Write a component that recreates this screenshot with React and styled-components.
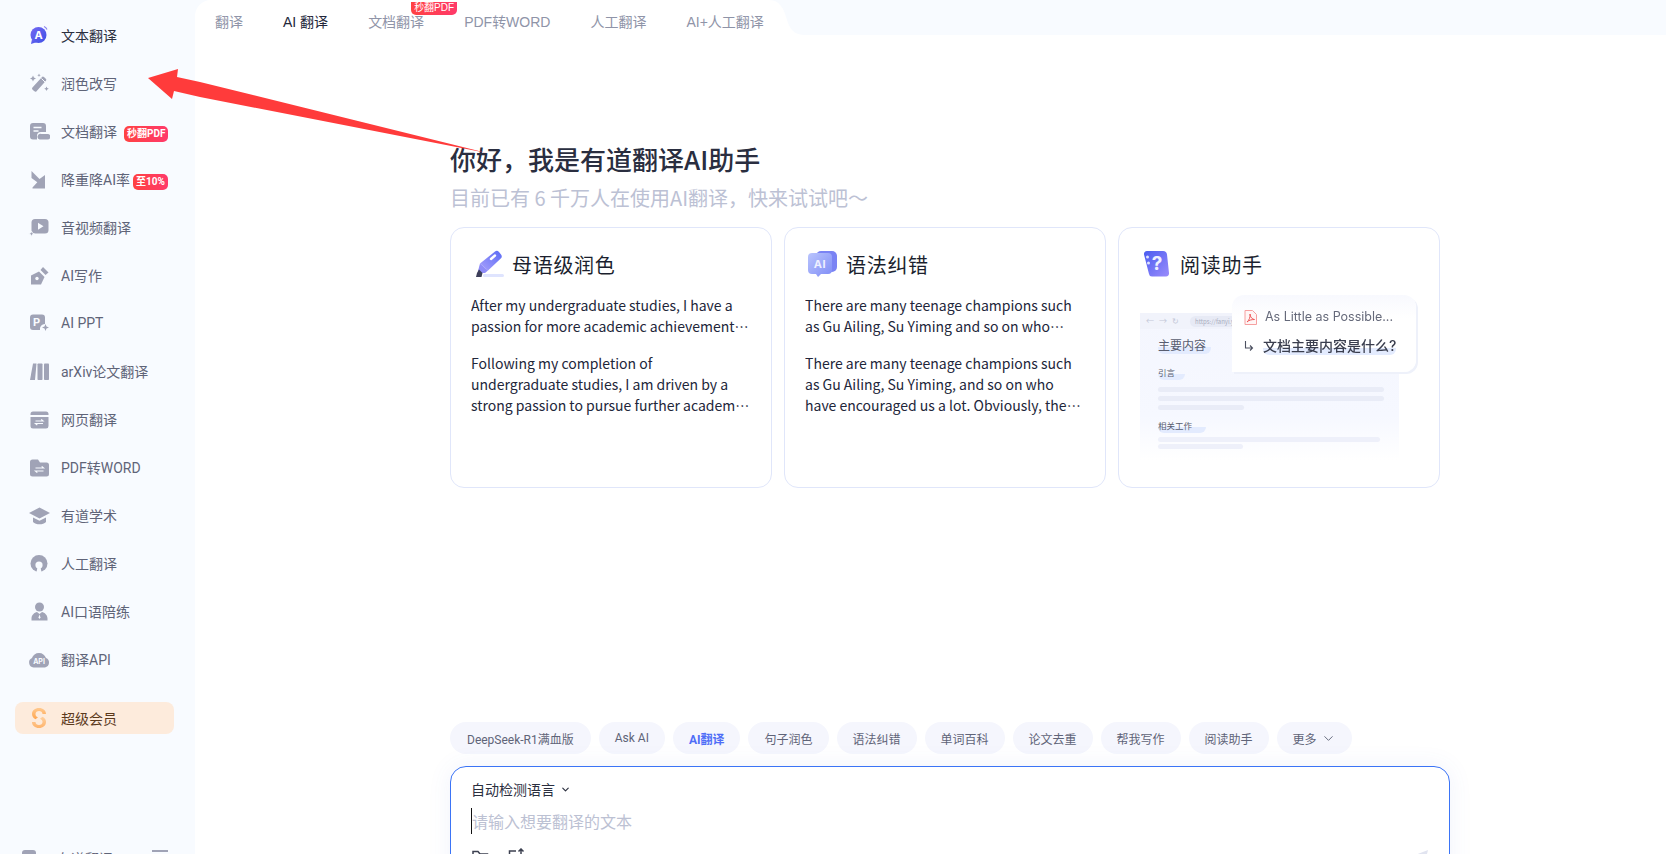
import React from "react";
import styled, { createGlobalStyle } from "styled-components";
import { ChevronDown } from "lucide-react";

const GlobalStyle = createGlobalStyle`
  * { box-sizing: border-box; }
  html, body { margin: 0; height: 100%; overflow: hidden; background: #f8fbff; }
  body { font-family: Roboto, "Noto Sans CJK SC", sans-serif; }
`;

const Page = styled.div`
  position: relative;
  display: flex;
  width: 1666px;
  height: 854px;
  overflow: hidden;
  background: #f8fbff;
`;

/* sidebar */
const Sidebar = styled.aside`
  width: 195px;
  flex: none;
  padding: 11px 21px 0 15px;
`;

const NavItem = styled.div`
  display: flex;
  align-items: center;
  gap: 11px;
  height: 48px;
  padding-left: 13px;
  font-size: 14px;
  color: ${(p) => (p.$active ? "#2b2f3f" : "#5f6478")};
  white-space: nowrap;
`;

const VipItem = styled(NavItem)`
  height: 32px;
  margin-top: 19px;
  border-radius: 8px;
  background: #fdebdc;
  color: #5c3a1c;
`;

const IconBox = styled.svg`
  width: 22px;
  height: 22px;
  flex: none;
  fill: #a0a3b6;
`;

const HotBadge = styled.span`
  display: inline-block;
  height: 16px;
  margin-left: ${(p) => p.$offset}px;
  padding: 0 3px;
  border-radius: 5px;
  background: linear-gradient(90deg, #ff4242, #ff3a6a);
  color: #fff;
  font-size: 10px;
  font-weight: 700;
  line-height: 16px;
`;

const SideFooter = styled.div`
  display: flex;
  align-items: flex-start;
  margin-top: 116px;
  padding-left: 7px;
  font-size: 14px;
  color: #5f6478;
`;

const FootAvatar = styled.div`
  width: 14px;
  height: 14px;
  border-radius: 3px;
  background: #a0a3b6;
`;

const FootName = styled.div`
  margin-left: 21px;
  line-height: 18px;
  width: 95px;
`;

const FootMenu = styled.div`
  width: 16px;
  height: 2px;
  background: #a0a3b6;
`;

/* main panel */
const Main = styled.main`
  flex: 1;
  min-width: 0;
  background: #fff;
  border-top-left-radius: 16px;
`;

const TabRow = styled.div`
  display: flex;
  height: 35px;
`;

const Tabs = styled.nav`
  display: flex;
  gap: 40px;
  padding: 9px 5px 0 20px;
  height: 35px;
  align-items: center;
`;

const Tab = styled.div`
  position: relative;
  font-family: "Liberation Sans", "Noto Sans CJK SC", sans-serif;
  font-size: 14px;
  line-height: 20px;
  color: ${(p) => (p.$active ? "#22263a" : "#8f94a8")};
  white-space: nowrap;
`;

const TabBadge = styled.span`
  position: absolute;
  top: -10px;
  left: 43px;
  height: 13px;
  padding: 0 3px;
  border-radius: 0 0 5px 5px;
  background: linear-gradient(90deg, #ff4242, #ff3a6a);
  color: #fff;
  font-size: 10px;
  line-height: 12px;
`;

const TabCurve = styled.svg`
  width: 42px;
  height: 35px;
  flex: none;
  fill: #f8fbff;
`;

const TabFill = styled.div`
  flex: 1;
  background: #f8fbff;
`;

const Content = styled.div`
  width: 1000px;
  margin-left: 255px;
  font-family: "Noto Sans CJK SC", sans-serif;
`;

const Heading = styled.h1`
  margin: 107px 0 0;
  font-size: 26px;
  font-weight: 500;
  line-height: 34px;
  color: #2a2e40;
`;

const SubHeading = styled.p`
  margin: 8px 0 0;
  font-size: 20px;
  line-height: 28px;
  color: #bcc1d4;
`;

const CardGrid = styled.div`
  display: grid;
  grid-template-columns: repeat(3, 321.5px);
  gap: 12.5px;
  margin-top: 15px;
`;

const Card = styled.section`
  height: 261px;
  padding: 22px 20px 0;
  border: 1px solid #e0e6fa;
  border-radius: 14px;
  background: #fff;
`;

const CardTitle = styled.div`
  display: flex;
  align-items: center;
  gap: 8px;
  height: 28px;
  font-size: 20px;
  letter-spacing: 0.7px;
  color: #1b1f2e;
`;

const TitleIcon = styled.svg`
  width: 32px;
  height: 32px;
  margin-left: 1px;
  flex: none;
`;

const Sample = styled.p`
  margin: 0;
  font-size: 14px;
  line-height: 21px;
  color: #22263a;
  display: -webkit-box;
  -webkit-box-orient: vertical;
  -webkit-line-clamp: ${(p) => p.$lines};
  overflow: hidden;
  margin-top: ${(p) => p.$gap}px;
`;

/* reading assistant illustration */
const Preview = styled.div`
  position: relative;
  margin: 35px 0 0 1px;
  width: 259px;
  height: 147px;
  filter: blur(0.25px);
`;

const Browser = styled.div`
  height: 100%;
  background: linear-gradient(180deg, #f4f6fe 0%, #f6f8ff 70%, #fff 100%);
  color: #585d70;
`;

const BrowserBar = styled.div`
  display: flex;
  align-items: center;
  gap: 5px;
  height: 16px;
  padding-left: 6px;
  background: #f1f3fb;
  overflow: hidden;
`;

const BarIcon = styled.span`
  width: 8px;
  font-size: 8px;
  line-height: 8px;
  color: #c4c8d8;
`;

const UrlPill = styled.span`
  margin-left: 5px;
  width: 70px;
  height: 11px;
  padding-left: 5px;
  border-radius: 6px;
  background: #e7eaf5;
  font-size: 6px;
  line-height: 11px;
  color: #a8adc0;
  white-space: nowrap;
`;

const BrowserBody = styled.div`
  padding: 2px 15px 0 18px;
`;

const Marked = styled.div`
  display: inline-block;
  font-size: ${(p) => p.$size}px;
  line-height: ${(p) => p.$size + 6}px;
  padding-right: ${(p) => p.$tail}px;
  margin-top: ${(p) => p.$top}px;
  border-radius: 0 0 6px 6px;
  background: linear-gradient(180deg, transparent 62%, #e3ebfe 62%);
`;

const Skeleton = styled.div`
  height: 5px;
  margin-top: ${(p) => p.$top}px;
  width: ${(p) => p.$width}px;
  border-radius: 3px;
  background: ${(p) => p.$color || "#e9ecf7"};
`;

const Popup = styled.div`
  position: absolute;
  top: -18px;
  left: 92px;
  width: 184px;
  height: 77px;
  padding: 14px 0 0 12px;
  background: linear-gradient(180deg, #f8f9fe 0%, #fff 30%);
  border-radius: 12px 12px 12px 0;
  box-shadow: 2px 2px 0 #eef1fa;
`;

const PopupRow = styled.div`
  display: flex;
  align-items: center;
  gap: ${(p) => p.$gap}px;
  margin-top: ${(p) => p.$top}px;
  font-family: Inter, "Noto Sans CJK SC", sans-serif;
  font-size: 12.5px;
  line-height: 16px;
  color: #65697a;
  white-space: nowrap;
`;

const PopupAsk = styled.span`
  font-size: 14px;
  font-weight: 500;
  line-height: 19px;
  color: #3a3e4e;
  background: linear-gradient(180deg, transparent 62%, #e3ebfe 62%);
  border-radius: 0 0 6px 6px;
`;

/* prompt box */
const Chips = styled.div`
  display: flex;
  gap: 8px;
  margin-top: 234px;
  font-family: Roboto, "Noto Sans CJK SC", sans-serif;
`;

const Chip = styled.div`
  display: flex;
  align-items: center;
  gap: 4px;
  height: 32px;
  padding: 0 ${(p) => (p.$wide ? 17 : 16)}px;
  border-radius: 16px;
  background: #f5f6fd;
  font-size: 12px;
  font-weight: ${(p) => (p.$active ? 700 : 400)};
  color: ${(p) => (p.$active ? "#4f6ef7" : "#5f6478")};
  white-space: nowrap;
`;

const InputBox = styled.div`
  position: relative;
  height: 130px;
  margin-top: 12px;
  padding: 12px 20px 0;
  border: 1px solid #3b74f6;
  border-radius: 16px;
  background: #fff;
  box-shadow: 0 0 24px rgba(80, 100, 200, 0.08);
`;

const LangPick = styled.div`
  display: flex;
  align-items: center;
  gap: 5px;
  font-size: 14px;
  line-height: 20px;
  color: #2b2f3f;
`;

const Placeholder = styled.div`
  margin-top: 9px;
  height: 26px;
  border-left: 1px solid #111;
  font-size: 16px;
  line-height: 26px;
  color: #bcc1d3;
`;

const ToolRow = styled.div`
  display: flex;
  gap: 17px;
  margin-top: 14px;
`;

const ToolIcon = styled.svg`
  width: 19px;
  height: 19px;
  fill: none;
  stroke: #3c4050;
  stroke-width: 1.5;
`;

const SendIcon = styled.svg`
  position: absolute;
  right: 20px;
  top: 81px;
  width: 20px;
  height: 20px;
  fill: #e1e4f0;
`;

/* annotation drawn over the screenshot */
const RedArrow = styled.svg`
  position: absolute;
  left: 0;
  top: 0;
  width: 520px;
  height: 180px;
  fill: #ff3b3b;
  pointer-events: none;
`;

const navIcons = {
  text: (
    <>
      <defs>
        <linearGradient id="navA" x1="0" y1="0" x2="1" y2="1">
          <stop offset="0" stopColor="#7468f2" />
          <stop offset="1" stopColor="#3f51e6" />
        </linearGradient>
      </defs>
      <circle cx="10.5" cy="11" r="8" fill="url(#navA)" />
      <path d="M4 15l-1 5 6-2z" fill="url(#navA)" />
      <path d="M16 2.5a6 6 0 0 1 3 3" fill="none" stroke="#8b84ee" strokeWidth="1.2" />
      <text x="10.5" y="15" textAnchor="middle" fontSize="11" fontWeight="700" fill="#fff" fontFamily="Inter">A</text>
    </>
  ),
  wand: (
    <>
      <rect x="2.5" y="9.500" width="17" height="5.500" rx="1.500" transform="rotate(-48 11 12)" />
      <path d="M13.500 6.500l3.500 3.500" stroke="#f8fbff" strokeWidth="1" />
      <path d="M5 3.500l.9 2.100 2.100.9-2.100.9-.9 2.100-.9-2.100-2.100-.9 2.100-.9zM18.500 14.500l.7 1.600 1.600.7-1.600.7-.7 1.600-.7-1.600-1.600-.7 1.600-.7zM11 1.500l.5 1.200 1.200.5-1.200.5-.5 1.200-.5-1.200-1.200-.5 1.200-.5z" />
    </>
  ),
  doc: (
    <>
      <path d="M5 3h10a3 3 0 0 1 3 3v6h-5a4 4 0 0 0-4 4v3.500H5a3 3 0 0 1-3-3V6a3 3 0 0 1 3-3z" />
      <path d="M11.500 19.500a2.500 2.500 0 0 1 2-5.500H19.500a2 2 0 0 1 0 5.500z" />
      <path d="M5.500 7.500h8M5.500 11h5" stroke="#f8fbff" strokeWidth="1.600" fill="none" />
    </>
  ),
  reduce: (
    <>
      <path d="M3.500 3l8 8 5.500-4v13.500H4.500v-1l4.800-5.300L3.500 10z" />
    </>
  ),
  video: (
    <>
      <rect x="3.500" y="3" width="17" height="14.500" rx="3.500" />
      <path d="M10 6.800l5.500 3.500-5.500 3.500z" fill="#f8fbff" />
      <path d="M3.500 15l.8 2 2 .8-2 .8-.8 2-.8-2-2-.8 2-.8z" stroke="#f8fbff" strokeWidth=".8" />
    </>
  ),
  pen: (
    <>
      <path d="M3 20.500V11.500L11 7.500l5.500 5.500-3.500 7.500z" />
      <path d="M12.500 6l2.500-3 5.500 5.500-3 2.500z" />
      <circle cx="9" cy="14.500" r="1.700" fill="#f8fbff" />
    </>
  ),
  ppt: (
    <>
      <path d="M5 2.500h9a3 3 0 0 1 3 3V12a5 5 0 0 0-5 6H5a3 3 0 0 1-3-3V5.500a3 3 0 0 1 3-3z" />
      <text x="5" y="13.500" fontSize="11" fontWeight="700" fill="#f8fbff" fontFamily="Inter">P</text>
      <path d="M17.500 12l1 2.500 2.500 1-2.500 1-1 2.500-1-2.500-2.500-1 2.500-1z" />
    </>
  ),
  books: (
    <>
      <path d="M5 3.500h3.500L7 20H2z" />
      <rect x="9.500" y="3.500" width="5" height="16.500" rx=".8" />
      <rect x="16" y="3.500" width="5" height="16.500" rx=".8" />
    </>
  ),
  web: (
    <>
      <path d="M5 3.500h13a2.500 2.500 0 0 1 2.500 2.500v1H2.500V6A2.500 2.500 0 0 1 5 3.500z" />
      <path d="M2.500 9h18v9a2.500 2.500 0 0 1-2.500 2.500H5A2.500 2.500 0 0 1 2.500 18z" />
      <path d="M7.500 13h7.500l-1.800-1.600M15 15.500H7.500l1.800 1.600" stroke="#f8fbff" strokeWidth="1.200" fill="none" />
    </>
  ),
  folder: (
    <>
      <path d="M4.500 3.500h5.500l2 3h6.500A2.500 2.500 0 0 1 21 9v9a2.500 2.500 0 0 1-2.500 2.500h-14A2.500 2.500 0 0 1 2 18V6a2.500 2.500 0 0 1 2.500-2.500z" />
      <path d="M7.500 12h8l-1.800-1.600M15.500 15H7.500l1.800 1.600" stroke="#f8fbff" strokeWidth="1.200" fill="none" />
    </>
  ),
  cap: (
    <>
      <path d="M11.500 3.500L22 9l-10.500 5.500L1 9z" />
      <path d="M5 13.500l6.500 3.300 6.500-3.300v4.500c-1.500 1.500-4 2.300-6.500 2.300S6.500 19.500 5 18z" />
    </>
  ),
  human: (
    <>
      <circle cx="11" cy="11.500" r="8.500" />
      <circle cx="11" cy="13" r="3.600" fill="#f8fbff" />
      <path d="M9.500 15h3l1 5.500h-5z" fill="#f8fbff" />
    </>
  ),
  person: (
    <>
      <circle cx="11.500" cy="7" r="4.500" />
      <path d="M3.500 20.500v-2c0-3.500 3-6 5.500-6.500l2.500 2 2.500-2c2.500.5 5.500 3 5.500 6.500v2z" />
      <path d="M11.500 14.500l1 3-1 1.500-1-1.500z" fill="#f8fbff" />
    </>
  ),
  cloud: (
    <>
      <path d="M5.500 19.500A5 5 0 0 1 4 10c1-3 3.500-5 7-5 3.500 0 5.800 2 7 5a5 5 0 0 1-1 9.500z" />
      <text x="11" y="16" textAnchor="middle" fontSize="7" fontWeight="700" fill="#f8fbff" fontFamily="Inter">API</text>
    </>
  ),
  vip: (
    <>
      <defs>
        <linearGradient id="navS" x1="0" y1="0" x2="0" y2="1">
          <stop offset="0" stopColor="#ffc98f" />
          <stop offset="1" stopColor="#ffa64f" />
        </linearGradient>
      </defs>
      <path d="M18 7C18 3.500 15 1 11 1 7 1 4 3.500 4 7c0 2.300 1.200 4 3.500 5.200L10 10.300C8 9.500 7.500 8.500 7.500 7c0-1.700 1.500-3 3.500-3s3.500 1.300 3.500 3z" fill="url(#navS)" />
      <path d="M4 15c0 3.500 3 6 7 6s7-2.500 7-6c0-2.300-1.200-4-3.500-5.200L12 11.700c2 .8 2.500 1.800 2.500 3.300 0 1.700-1.500 3-3.500 3s-3.500-1.300-3.500-3z" fill="url(#navS)" opacity=".8" />
    </>
  ),
};

const navItems = [
  { icon: "text", label: "文本翻译", active: true },
  { icon: "wand", label: "润色改写" },
  { icon: "doc", label: "文档翻译", badge: "秒翻PDF", offset: 7 },
  { icon: "reduce", label: "降重降AI率", badge: "至10%", offset: 3 },
  { icon: "video", label: "音视频翻译" },
  { icon: "pen", label: "AI写作" },
  { icon: "ppt", label: "AI PPT" },
  { icon: "books", label: "arXiv论文翻译" },
  { icon: "web", label: "网页翻译" },
  { icon: "folder", label: "PDF转WORD" },
  { icon: "cap", label: "有道学术" },
  { icon: "human", label: "人工翻译" },
  { icon: "person", label: "AI口语陪练" },
  { icon: "cloud", label: "翻译API" },
];

const tabs = ["翻译", "AI 翻译", "文档翻译", "PDF转WORD", "人工翻译", "AI+人工翻译"];

const chips = ["DeepSeek-R1满血版", "Ask AI", "AI翻译", "句子润色", "语法纠错", "单词百科", "论文去重", "帮我写作", "阅读助手"];

function PolishIcon() {
  return (
    <TitleIcon viewBox="0 0 32 32">
      <defs>
        <linearGradient id="polishA" x1="1" y1="0" x2="0" y2="1">
          <stop offset="0" stopColor="#5c6cf6" />
          <stop offset="1" stopColor="#a8a0fb" />
        </linearGradient>
      </defs>
      <path d="M23 3.500a3 3 0 0 1 4 .5l2 2.500a3 3 0 0 1-.5 4.200L16 22.500l-8-7z" fill="url(#polishA)" />
      <path d="M8 15.500l8 7-3 2.500H7l-1-2z" fill="#8f8cf8" />
      <path d="M5 25l2-3.500 3.500 3.500-1 4H4z" fill="#3d3f5a" />
      <path d="M19 11l4-3.500" stroke="#fff" strokeWidth="2.400" strokeLinecap="round" />
      <rect x="11" y="26" width="21" height="3" rx="1.500" fill="#dfe4fe" />
    </TitleIcon>
  );
}

function GrammarIcon() {
  return (
    <TitleIcon viewBox="0 0 32 32">
      <defs>
        <linearGradient id="grammarA" x1="0" y1="0" x2="1" y2="1">
          <stop offset="0" stopColor="#b9c4fd" />
          <stop offset="1" stopColor="#7f8cf6" />
        </linearGradient>
      </defs>
      <rect x="10" y="3" width="21" height="21" rx="5" fill="#7a83f4" />
      <path d="M6 5h16a4 4 0 0 1 4 4v13a4 4 0 0 1-4 4h-7l-3 3-2-3H6a4 4 0 0 1-4-4V9a4 4 0 0 1 4-4z" fill="url(#grammarA)" />
      <text x="14" y="20" textAnchor="middle" fontSize="11" fontWeight="700" fill="#eef0ff" fontFamily="Inter">AI</text>
    </TitleIcon>
  );
}

function ReaderIcon() {
  return (
    <TitleIcon viewBox="0 0 32 32">
      <defs>
        <linearGradient id="readerA" x1="0" y1="0" x2="1" y2="1">
          <stop offset="0" stopColor="#4a5cf0" />
          <stop offset="1" stopColor="#9a8cfb" />
        </linearGradient>
      </defs>
      <path d="M7 3h16a4 4 0 0 1 4 3.500L29 25a3 3 0 0 1-3 3.500H12a3 3 0 0 1-3-2.500L4 6.500A3 3 0 0 1 7 3z" fill="url(#readerA)" />
      <circle cx="7.500" cy="9" r="1.500" fill="#dfe2ff" />
      <circle cx="8.500" cy="15" r="1.500" fill="#dfe2ff" />
      <text x="17.500" y="22" textAnchor="middle" fontSize="19" fontWeight="700" fill="#eef0ff" fontFamily="Inter">?</text>
    </TitleIcon>
  );
}

function ReadingPreview() {
  return (
    <Preview>
      <Browser>
        <BrowserBar>
          <BarIcon>←</BarIcon>
          <BarIcon>→</BarIcon>
          <BarIcon>↻</BarIcon>
          <UrlPill>https://fanyi.yo</UrlPill>
        </BrowserBar>
        <BrowserBody>
          <Marked $size={12} $tail={5} $top={0}>主要内容</Marked>
          <br />
          <Marked $size={8.500} $tail={10} $top={10}>引言</Marked>
          <Skeleton $width={226} $top={6} />
          <Skeleton $width={226} $top={4} />
          <Skeleton $width={86} $top={4} />
          <Marked $size={8.500} $tail={14} $top={8}>相关工作</Marked>
          <Skeleton $width={222} $top={3} $color="#eef0fa" />
          <Skeleton $width={85} $top={2} $color="#eef0fa" />
        </BrowserBody>
      </Browser>
      <Popup>
        <PopupRow $gap={8} $top={0}>
          <svg width="13" height="15" viewBox="0 0 13 15" fill="none" stroke="#f6a0a0">
            <path d="M1 .5h7.500L12.500 4.500v10H1z" fill="#fff5f5" />
            <path d="M3 12c2-1.500 3.500-5 3-8 0 3 2.500 5.500 4.500 5.500C8 9.500 5 10 3 12z" stroke="#ee5a5a" />
          </svg>
          As Little as Possible...
        </PopupRow>
        <PopupRow $gap={9} $top={11}>
          <svg width="10" height="12" viewBox="0 0 10 12" fill="none" stroke="#4c5060" strokeWidth="1.100">
            <path d="M1.500 1v7h7M6 5.500L8.500 8 6 10.500" />
          </svg>
          <PopupAsk>文档主要内容是什么?</PopupAsk>
        </PopupRow>
      </Popup>
    </Preview>
  );
}

export default function App() {
  return (
    <Page>
      <GlobalStyle />
      <Sidebar>
        {navItems.map((item) => (
          <NavItem key={item.label} $active={item.active}>
            <IconBox viewBox="0 0 22 22">{navIcons[item.icon]}</IconBox>
            <span>
              {item.label}
              {item.badge && <HotBadge $offset={item.offset}>{item.badge}</HotBadge>}
            </span>
          </NavItem>
        ))}
        <VipItem>
          <IconBox viewBox="0 0 22 22">{navIcons.vip}</IconBox>
          超级会员
        </VipItem>
        <SideFooter>
          <FootAvatar />
          <FootName>有道翻译</FootName>
          <FootMenu />
        </SideFooter>
      </Sidebar>

      <Main>
        <TabRow>
          <Tabs>
            {tabs.map((t) => (
              <Tab key={t} $active={t === "AI 翻译"}>
                {t}
                {t === "文档翻译" && <TabBadge>秒翻PDF</TabBadge>}
              </Tab>
            ))}
          </Tabs>
          <TabCurve viewBox="0 0 42 35">
            <path d="M0 0h42v35H36C26 35 21 30 18 20 15 9 11 0 0 0z" />
          </TabCurve>
          <TabFill />
        </TabRow>

        <Content>
          <Heading>你好，我是有道翻译AI助手</Heading>
          <SubHeading>目前已有 6 千万人在使用AI翻译，快来试试吧～</SubHeading>

          <CardGrid>
            <Card>
              <CardTitle>
                <PolishIcon />
                母语级润色
              </CardTitle>
              <Sample $lines={2} $gap={17}>
                After my undergraduate studies, I have a passion for more academic achievements and I want to study further.
              </Sample>
              <Sample $lines={3} $gap={16}>
                Following my completion of undergraduate studies, I am driven by a strong passion to pursue further academic achievements in my field of interest.
              </Sample>
            </Card>
            <Card>
              <CardTitle>
                <GrammarIcon />
                语法纠错
              </CardTitle>
              <Sample $lines={2} $gap={17}>
                There are many teenage champions such as Gu Ailing, Su Yiming and so on who encouraged us a lot.
              </Sample>
              <Sample $lines={3} $gap={16}>
                There are many teenage champions such as Gu Ailing, Su Yiming, and so on who have encouraged us a lot. Obviously, they have set an example for all of us.
              </Sample>
            </Card>
            <Card>
              <CardTitle>
                <ReaderIcon />
                阅读助手
              </CardTitle>
              <ReadingPreview />
            </Card>
          </CardGrid>

          <Chips>
            {chips.map((c, i) => (
              <Chip key={c} $active={c === "AI翻译"} $wide={i === 0}>{c}</Chip>
            ))}
            <Chip>
              更多
              <ChevronDown size={15} strokeWidth={1.500} />
            </Chip>
          </Chips>

          <InputBox>
            <LangPick>
              自动检测语言
              <ChevronDown size={11} strokeWidth={2.500} />
            </LangPick>
            <Placeholder>请输入想要翻译的文本</Placeholder>
            <ToolRow>
              <ToolIcon viewBox="0 0 19 19">
                <path d="M2 15V3.500h5l2 2.500h7.500v9z" />
              </ToolIcon>
              <ToolIcon viewBox="0 0 19 19">
                <path d="M9 3H2.500v12.500H16V10M14 7V1M11.500 3.500L14 1l2.500 2.500M5 12l3-3 2 2" />
              </ToolIcon>
            </ToolRow>
            <SendIcon viewBox="0 0 20 20">
              <path d="M1 9L19 2 15 18 9 13z" />
            </SendIcon>
          </InputBox>
        </Content>
      </Main>

      <RedArrow viewBox="0 0 520 180">
        <path d="M148 78L178 69 177 77 200 82 487 153 200 97 174 91 172 99z" />
      </RedArrow>
    </Page>
  );
}
